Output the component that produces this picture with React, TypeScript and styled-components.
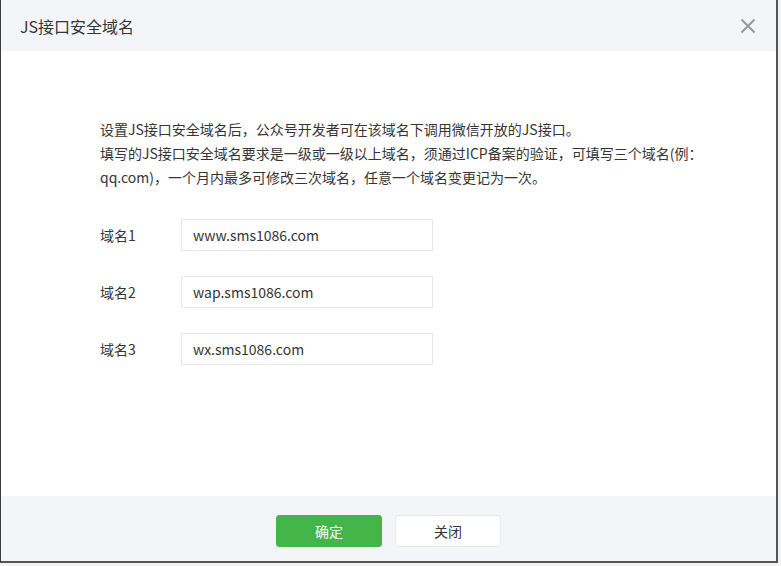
import React from 'react'
import styled, { createGlobalStyle } from 'styled-components'

const GlobalStyle = createGlobalStyle`
  html, body {
    margin: 0;
    padding: 0;
    background: #f2f2f2;
  }
  body {
    font-family: 'Noto Sans CJK SC', 'Noto Sans', sans-serif;
    color: #353535;
  }
`

const Dialog = styled.div`
  width: 778px;
  height: 563px;
  box-sizing: border-box;
  display: flex;
  flex-direction: column;
  background: #fff;
  border-left: 1px solid #3c3c3c;
  border-right: 2px solid #555;
  border-bottom: 2px solid #555;
`

const Header = styled.div`
  height: 51px;
  flex-shrink: 0;
  display: flex;
  align-items: center;
  justify-content: space-between;
  padding: 0 19px 0 19px;
  background: #f4f5f9;
`

const Title = styled.h3`
  margin: 0;
  font-size: 16px;
  font-weight: 400;
  color: #353535;
`

const CloseButton = styled.button`
  width: 18px;
  height: 18px;
  padding: 0;
  border: 0;
  background: none;
  cursor: pointer;
  display: flex;
  align-items: center;
  justify-content: center;
`

const Body = styled.div`
  flex: 1;
  padding: 66px 0 0 99px;
`

const Desc = styled.p`
  margin: 0;
  font-size: 14px;
  line-height: 24px;
  color: #353535;
`

const Form = styled.div`
  margin-top: 30px;
  display: flex;
  flex-direction: column;
  gap: 25px;
`

const Row = styled.div`
  display: flex;
  align-items: center;
`

const Label = styled.label`
  width: 81px;
  font-size: 14px;
  color: #353535;
`

const Input = styled.input`
  width: 252px;
  height: 32px;
  box-sizing: border-box;
  padding: 0 11px 1px;
  border: 1px solid #e4e8eb;
  font-family: inherit;
  font-size: 14px;
  color: #353535;
  outline: none;
`

const Footer = styled.div`
  height: 65px;
  flex-shrink: 0;
  box-sizing: border-box;
  padding-top: 19px;
  display: flex;
  justify-content: center;
  gap: 13px;
  background: #f4f5f9;
`

const Button = styled.button<{ $primary?: boolean }>`
  width: 106px;
  height: 32px;
  box-sizing: border-box;
  border: 1px solid ${({ $primary }) => ($primary ? '#44b549' : '#e4e8eb')};
  border-radius: 3px;
  background: ${({ $primary }) => ($primary ? '#44b549' : '#fff')};
  color: ${({ $primary }) => ($primary ? '#fff' : '#353535')};
  font-family: inherit;
  font-size: 14px;
  cursor: pointer;
`

const domains = ['www.sms1086.com', 'wap.sms1086.com', 'wx.sms1086.com']

const App = () => {
  return (
    <>
      <GlobalStyle />
      <Dialog>
        <Header>
          <Title>JS接口安全域名</Title>
          <CloseButton aria-label='关闭'>
            <svg width='16' height='16' viewBox='0 0 16 16'>
              <path d='M1.5 1.5L14.5 14.5M14.5 1.5L1.5 14.5' stroke='#999' strokeWidth='2' fill='none' />
            </svg>
          </CloseButton>
        </Header>
        <Body>
          <Desc>
            设置JS接口安全域名后，公众号开发者可在该域名下调用微信开放的JS接口。
            <br />
            填写的JS接口安全域名要求是一级或一级以上域名，须通过ICP备案的验证，可填写三个域名(例：
            <br />
            qq.com)，一个月内最多可修改三次域名，任意一个域名变更记为一次。
          </Desc>
          <Form>
            {domains.map((d, i) => (
              <Row key={d}>
                <Label>域名{i + 1}</Label>
                <Input defaultValue={d} />
              </Row>
            ))}
          </Form>
        </Body>
        <Footer>
          <Button $primary>确定</Button>
          <Button>关闭</Button>
        </Footer>
      </Dialog>
    </>
  )
}

export default App
